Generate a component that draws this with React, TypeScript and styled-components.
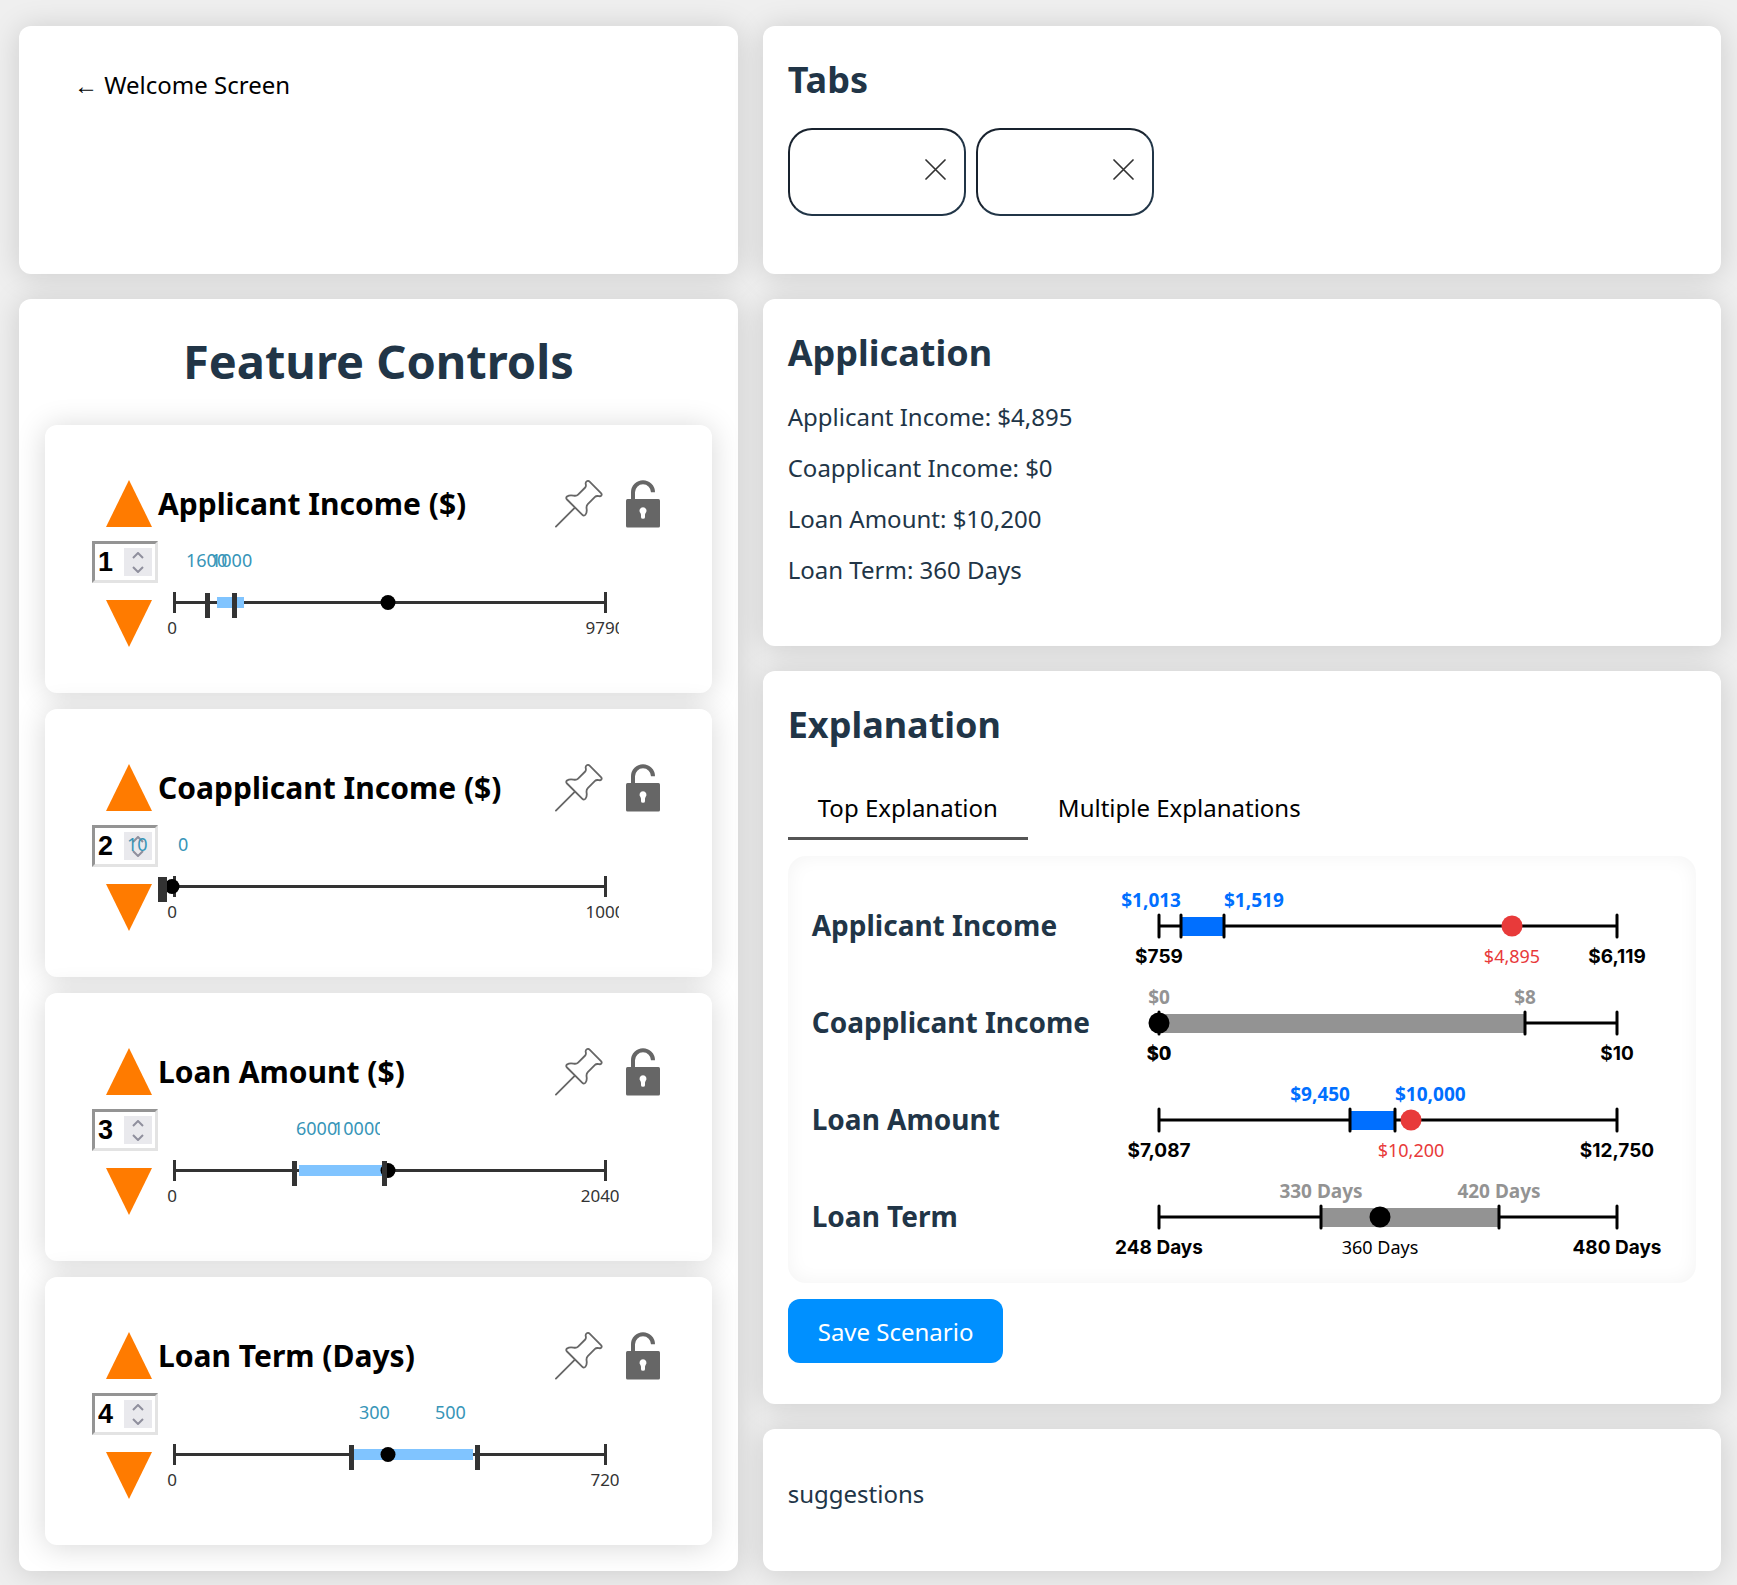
import React, { useState } from "react";
import styled, { createGlobalStyle, css } from "styled-components";

const GlobalStyle = createGlobalStyle`
  *, *::before, *::after { box-sizing: border-box; }
  body {
    margin: 0;
    background: #efefef;
    color: #213547;
    font-family: "Segoe UI", "Noto Sans", "Open Sans", sans-serif;
    font-size: 24px;
    line-height: 31px;
  }
  h1, h2, h3, p { margin: 0; }
  button, input { font-family: inherit; color: inherit; }
`;

const Page = styled.main`
  display: grid;
  grid-template-columns: 3fr 4fr;
  gap: 25px;
  min-height: 100vh;
  padding: 26px 16px 14px 19px;
`;

const Column = styled.div`
  display: flex;
  flex-direction: column;
  gap: 25px;
  min-width: 0;
`;

const Panel = styled.section<{ $minHeight?: number; $grow?: boolean }>`
  padding: 25px;
  border-radius: 12px;
  background: #fff;
  box-shadow: 0 2px 30px rgba(0, 0, 0, 0.15);
  min-height: ${(p) => p.$minHeight ?? 0}px;
  flex-grow: ${(p) => (p.$grow ? 1 : 0)};
`;

const BackButton = styled.button`
  margin-top: 8px;
  padding: 10px 30px;
  border: 0;
  background: none;
  color: #000;
  font-size: 24px;
  line-height: 31px;
  cursor: pointer;
`;

const MainHeading = styled.h1`
  padding: 7px 0 34px;
  font-size: 47px;
  line-height: 60px;
  text-align: center;
`;

const Heading = styled.h2`
  padding: 5px 0;
  font-size: 36px;
  line-height: 48px;
`;

/* Feature controls */

const CardList = styled.div`
  display: flex;
  flex-direction: column;
  gap: 16px;
  padding: 0 1px;
`;

const Card = styled.article`
  display: flex;
  height: 268px;
  padding: 55px 52px 0 47px;
  border-radius: 12px;
  background: #fff;
  box-shadow: 0 2px 30px rgba(0, 0, 0, 0.16);
`;

const RankColumn = styled.div`
  display: flex;
  flex-direction: column;
  width: 66px;
  flex: none;
`;

const ArrowButton = styled.button`
  display: block;
  width: 46px;
  height: 47px;
  margin-left: 14px;
  padding: 0;
  border: 0;
  background: none;
  color: #ff7b00;
  cursor: pointer;
  svg { display: block; }
`;

const RankField = styled.div`
  display: flex;
  align-items: center;
  height: 42px;
  margin: 14px 0 17px;
  padding: 0 3px;
  border: 3px solid;
  border-color: #949494 #e3e3e3 #e3e3e3 #949494;
  background: #fff;
`;

const RankInput = styled.input`
  width: 26px;
  height: 32px;
  padding: 0;
  border: 0;
  outline: 0;
  background: none;
  color: #000;
  font-family: "Liberation Sans", Arial, sans-serif;
  font-size: 27px;
  font-weight: 700;
  appearance: textfield;
  &::-webkit-inner-spin-button { appearance: none; margin: 0; }
`;

const Stepper = styled.div`
  display: flex;
  flex-direction: column;
  width: 28px;
  height: 28px;
  background: #e9e9ed;
`;

const StepButton = styled.button`
  display: grid;
  place-items: center;
  flex: 1;
  padding: 0;
  border: 0;
  background: none;
  color: #8f8f9d;
`;

const CardBody = styled.div`
  flex: 1;
  min-width: 0;
`;

const CardHeader = styled.div`
  display: flex;
  align-items: center;
  height: 47px;
`;

const CardTitle = styled.h3`
  flex: 1;
  color: #000;
  font-size: 30px;
  line-height: 44px;
  white-space: nowrap;
`;

const IconButton = styled.button`
  padding: 0;
  border: 0;
  background: none;
  color: #666;
  cursor: pointer;
  & + & { margin-left: 23px; }
  svg { display: block; }
`;

const Slider = styled.div`
  position: relative;
  width: 461px;
  height: 104px;
  margin-top: 14px;
`;

const SliderTrack = styled.svg`
  display: block;
  overflow: visible;
  clip-path: inset(0 0 0 -60px);
  text { font-size: 17px; fill: #333; text-anchor: middle; }
  text.bound { font-size: 18px; fill: #3795b8; text-anchor: start; }
`;

const thumb = css`
  appearance: none;
  width: 5px;
  height: 25px;
  border: 0;
  border-radius: 0;
  background: #333;
  pointer-events: auto;
  cursor: ew-resize;
`;

const Handle = styled.input`
  position: absolute;
  top: 52px;
  left: 0;
  width: 461px;
  height: 25px;
  margin: 0;
  appearance: none;
  background: none;
  pointer-events: none;
  &::-webkit-slider-thumb { ${thumb} }
  &::-moz-range-thumb { ${thumb} }
`;

/* Right-hand panels */

const TabRow = styled.div`
  display: flex;
  gap: 10px;
  padding-top: 19px;
`;

const ScenarioTab = styled.div`
  display: flex;
  justify-content: flex-end;
  width: 178px;
  height: 88px;
  padding: 29px 18px;
  border: 2px solid;
  border-color: #18222e #213547 #213547 #18222e;
  border-radius: 24px;
`;

const CloseButton = styled.button`
  width: 21px;
  height: 21px;
  padding: 0;
  border: 0;
  background: none;
  color: #333;
  cursor: pointer;
  svg { display: block; }
`;

const Facts = styled.div`
  display: flex;
  flex-direction: column;
  gap: 20px;
  padding-top: 19px;
`;

const ViewTabs = styled.div`
  display: flex;
  padding-top: 24px;
`;

const ViewTab = styled.button<{ $active?: boolean }>`
  height: 62px;
  padding: 0 30px;
  border: 0;
  border-bottom: 3px solid ${(p) => (p.$active ? "#555" : "transparent")};
  background: none;
  color: #000;
  font-size: 24px;
  line-height: 31px;
  cursor: pointer;
`;

const Chart = styled.div`
  margin: 16px 0;
  padding: 20px 34px 19px 24px;
  border-radius: 18px;
  box-shadow: inset 0 0 20px rgba(0, 0, 0, 0.05);
`;

const ChartRow = styled.div`
  display: flex;
  align-items: center;
  justify-content: space-between;
  height: 97px;
  font-size: 28px;
  font-weight: 700;
  line-height: 38px;
  white-space: nowrap;
`;

const RangeChart = styled.svg`
  display: block;
  flex: none;
  overflow: visible;
  font-size: 19px;
`;

const SaveButton = styled.button`
  display: block;
  height: 64px;
  padding: 0 30px;
  border: 0;
  border-radius: 12px;
  background: #0090ff;
  color: #fff;
  font-size: 24px;
  line-height: 31px;
  cursor: pointer;
`;

const Suggestions = styled.p`
  padding-top: 24px;
`;

type Feature = {
  name: string;
  max: string;
  low: { text: string; x: number };
  high: { text: string; x: number };
  band: [number, number];
  handles: [number, number];
  value: number;
};

const features: Feature[] = [
  { name: "Applicant Income ($)", max: "9790", low: { text: "1600", x: 28 }, high: { text: "1000", x: 53 }, band: [59, 86], handles: [47, 74], value: 230 },
  { name: "Coapplicant Income ($)", max: "1000", low: { text: "10", x: -31 }, high: { text: "0", x: 20 }, band: [0, 0], handles: [0, 4], value: 14 },
  { name: "Loan Amount ($)", max: "20400", low: { text: "6000", x: 138 }, high: { text: "10000", x: 175 }, band: [141, 225], handles: [134, 224], value: 230 },
  { name: "Loan Term (Days)", max: "720", low: { text: "300", x: 201 }, high: { text: "500", x: 277 }, band: [195, 315], handles: [191, 317], value: 230 },
];

type Range = {
  name: string;
  min: string;
  max: string;
  low: { text: string; x: number };
  high: { text: string; x: number };
  value: { text: string; x: number };
  change: boolean;
};

const ranges: Range[] = [
  { name: "Applicant Income", min: "$759", max: "$6,119", low: { text: "$1,013", x: 22 }, high: { text: "$1,519", x: 65 }, value: { text: "$4,895", x: 353 }, change: true },
  { name: "Coapplicant Income", min: "$0", max: "$10", low: { text: "$0", x: 0 }, high: { text: "$8", x: 366 }, value: { text: "$0", x: 0 }, change: false },
  { name: "Loan Amount", min: "$7,087", max: "$12,750", low: { text: "$9,450", x: 191 }, high: { text: "$10,000", x: 236 }, value: { text: "$10,200", x: 252 }, change: true },
  { name: "Loan Term", min: "248 Days", max: "480 Days", low: { text: "330 Days", x: 162 }, high: { text: "420 Days", x: 340 }, value: { text: "360 Days", x: 221 }, change: false },
];

const PinIcon = () => (
  <svg width="48" height="48" viewBox="0 0 48 48" fill="none" stroke="currentColor" strokeWidth="1.8" strokeLinecap="round" strokeLinejoin="round">
    <path d="M0.9 46.6 19.4 28.1" />
    <path d="M34.6 1.7 46 13.1C47.6 14.7 46 16.6 44.1 16.2 42.2 15.8 41.2 15.6 40 16.8L32.8 24.1C31.4 25.5 31.3 26.6 31.6 28.6 32 31.2 31.8 33.1 30.4 34.8 29.4 36 28.3 35.8 27.4 34.9L12 19.5C10.9 18.4 11 17.4 12 16.5 13.8 15.2 16 15 18.6 15.6 20.6 16 21.9 15.8 23.1 14.6L30.2 7.5C31.3 6.4 31 5.5 30.7 3.8 30.3 1.6 32.8-0.1 34.6 1.7Z" />
  </svg>
);

const UnlockIcon = () => (
  <svg width="34" height="48" viewBox="0 0 34 48">
    <path d="M7 20V12.3A10 10 0 0 1 27 12.3" fill="none" stroke="currentColor" strokeWidth="4" />
    <rect y="19" width="34" height="28.5" rx="1.5" fill="currentColor" />
    <path d="M17 27.2a3.5 3.5 0 0 1 2.6 5.8q-.6.8-.6 2v2.2q0 1.6-2 1.6t-2-1.6V35q0-1.2-.6-2A3.5 3.5 0 0 1 17 27.2Z" fill="#fff" />
  </svg>
);

const CloseIcon = () => (
  <svg width="21" height="21" viewBox="0 0 21 21" stroke="currentColor" strokeWidth="1.7" strokeLinecap="round">
    <path d="M1 1 20 20M20 1 1 20" />
  </svg>
);

const Arrow = ({ down }: { down?: boolean }) => (
  <svg width="46" height="47" viewBox="0 0 46 47" fill="currentColor">
    <path d={down ? "M0 0H46L23 47Z" : "M0 47H46L23 0Z"} />
  </svg>
);

const Chevron = ({ down }: { down?: boolean }) => (
  <svg width="12" height="7" viewBox="0 0 12 7" fill="none" stroke="currentColor" strokeWidth="2">
    <path d={down ? "M1 1 6 6 11 1" : "M1 6 6 1 11 6"} />
  </svg>
);

function FeatureCard({ feature, rank }: { feature: Feature; rank: number }) {
  const [position, setPosition] = useState(rank);
  const [low, setLow] = useState(feature.handles[0]);
  const [high, setHigh] = useState(feature.handles[1]);
  const [bandStart, bandEnd] = feature.band;
  const bump = (by: number) => setPosition((n) => Math.min(4, Math.max(1, n + by)));

  return (
    <Card>
      <RankColumn>
        <ArrowButton aria-label="Raise priority" onClick={() => bump(-1)}><Arrow /></ArrowButton>
        <RankField>
          <RankInput type="number" min={1} max={4} aria-label={`${feature.name} priority`} value={position} onChange={(e) => setPosition(Number(e.target.value))} />
          <Stepper>
            <StepButton aria-label="Increase" tabIndex={-1} onClick={() => bump(1)}><Chevron /></StepButton>
            <StepButton aria-label="Decrease" tabIndex={-1} onClick={() => bump(-1)}><Chevron down /></StepButton>
          </Stepper>
        </RankField>
        <ArrowButton aria-label="Lower priority" onClick={() => bump(1)}><Arrow down /></ArrowButton>
      </RankColumn>
      <CardBody>
        <CardHeader>
          <CardTitle>{feature.name}</CardTitle>
          <IconButton aria-label="Pin"><PinIcon /></IconButton>
          <IconButton aria-label="Unlock"><UnlockIcon /></IconButton>
        </CardHeader>
        <Slider>
          <SliderTrack width="461" height="104">
            <path d="M16 61.5H447M16.5 51V72M447.5 51V72" fill="none" stroke="#333" strokeWidth="3" />
            <text x="14" y="93">0</text>
            <text x="447" y="93">{feature.max}</text>
            <rect x={bandStart} y="56" width={bandEnd - bandStart} height="11" fill="#80c4ff" />
            <circle cx={feature.value} cy="61.5" r="7.5" fill="#000" />
            <text className="bound" x={feature.low.x} y="26">{feature.low.text}</text>
            <svg x={feature.high.x} width="47" height="40">
              <text className="bound" y="26">{feature.high.text}</text>
            </svg>
          </SliderTrack>
          <Handle type="range" min={0} max={456} aria-label={`${feature.name} lower bound`} value={low} onChange={(e) => setLow(Number(e.target.value))} />
          <Handle type="range" min={0} max={456} aria-label={`${feature.name} upper bound`} value={high} onChange={(e) => setHigh(Number(e.target.value))} />
        </Slider>
      </CardBody>
    </Card>
  );
}

function RangeRow({ range }: { range: Range }) {
  const { low, high, value, change } = range;
  const band = change ? "#006fff" : "#939393";
  const mark = change ? "#e83a3a" : "#000";
  return (
    <ChartRow>
      <span>{range.name}</span>
      <RangeChart width="538" height="97">
        <g transform="translate(35 50)">
          <path d="M0 0H458" stroke="#000" strokeWidth="3" />
          <rect x={low.x} y="-9" width={high.x - low.x} height="19" fill={band} />
          <path d={`M0-11V11M458-11V11M${low.x}-11V11M${high.x}-11V11`} stroke="#000" strokeWidth="3" strokeLinecap="round" />
          <circle cx={value.x} r="10.5" fill={mark} />
          <g fill={band} fontWeight="700">
            <text x={low.x} y="-19" textAnchor={change ? "end" : "middle"}>{low.text}</text>
            <text x={high.x} y="-19" textAnchor={change ? "start" : "middle"}>{high.text}</text>
          </g>
          <g textAnchor="middle">
            <text x={value.x} y="37" fill={mark} fontWeight="400" fontSize="18">{value.text}</text>
            <g fill="#000" fontWeight="700" fontFamily="Inter, sans-serif">
              <text y="37">{range.min}</text>
              <text x="458" y="37">{range.max}</text>
            </g>
          </g>
        </g>
      </RangeChart>
    </ChartRow>
  );
}

export default function App() {
  return (
    <>
      <GlobalStyle />
      <Page>
        <Column>
          <Panel $minHeight={248}>
            <BackButton>← Welcome Screen</BackButton>
          </Panel>
          <Panel $grow>
            <MainHeading>Feature Controls</MainHeading>
            <CardList>
              {features.map((f, i) => <FeatureCard key={f.name} feature={f} rank={i + 1} />)}
            </CardList>
          </Panel>
        </Column>
        <Column>
          <Panel $minHeight={248}>
            <Heading>Tabs</Heading>
            <TabRow>
              <ScenarioTab><CloseButton aria-label="Close tab"><CloseIcon /></CloseButton></ScenarioTab>
              <ScenarioTab><CloseButton aria-label="Close tab"><CloseIcon /></CloseButton></ScenarioTab>
            </TabRow>
          </Panel>
          <Panel $minHeight={347}>
            <Heading>Application</Heading>
            <Facts>
              <p>Applicant Income: $4,895</p>
              <p>Coapplicant Income: $0</p>
              <p>Loan Amount: $10,200</p>
              <p>Loan Term: 360 Days</p>
            </Facts>
          </Panel>
          <Panel $minHeight={733}>
            <Heading>Explanation</Heading>
            <ViewTabs role="tablist">
              <ViewTab role="tab" aria-selected $active>Top Explanation</ViewTab>
              <ViewTab role="tab" aria-selected={false}>Multiple Explanations</ViewTab>
            </ViewTabs>
            <Chart>
              {ranges.map((r) => <RangeRow key={r.name} range={r} />)}
            </Chart>
            <SaveButton>Save Scenario</SaveButton>
          </Panel>
          <Panel $grow>
            <Suggestions>suggestions</Suggestions>
          </Panel>
        </Column>
      </Page>
    </>
  );
}
